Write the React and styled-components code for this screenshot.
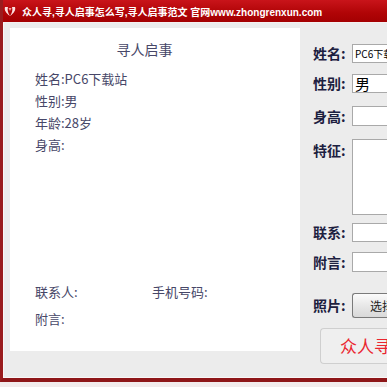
import React from "react";
import styled, { createGlobalStyle } from "styled-components";

const Global = createGlobalStyle`
  html, body { margin: 0; padding: 0; background: #f2ecec; }
  body { font-family: "Noto Sans CJK SC", "DejaVu Sans", sans-serif; }
`;

const Window = styled.div`
  width: 387px;
  height: 382px;
  overflow: hidden;
  display: flex;
  flex-direction: column;
  background: #ececec;
  border-left: 3px solid #9a1c1e;
  border-bottom: 4px solid #8e1618;
  box-sizing: border-box;
`;

const TitleBar = styled.div`
  height: 22px;
  flex: none;
  display: flex;
  align-items: center;
  gap: 6px;
  padding-left: 4px;
  margin-left: -3px;
  background: linear-gradient(#c9141a, #b00406 60%, #a40002);
  color: #fff;
  font-family: "Liberation Sans", "Noto Sans CJK SC", sans-serif;
  font-weight: bold;
  font-size: 10px;
  white-space: nowrap;
  border-bottom: 1px solid #f4f0f0;
`;

const Body = styled.div`
  flex: 1;
  display: flex;
  border-left: 1px solid #faf6f6;
  border-bottom: 1px solid #faf6f6;
  padding: 5px 0 0 6px;
  min-height: 0;
`;

const Sheet = styled.div`
  width: 290px;
  height: 323px;
  flex: none;
  background: #fff;
  box-sizing: border-box;
  padding: 11px 0 0 25px;
  color: #474768;
  font-size: 13px;
  display: flex;
  flex-direction: column;
`;

const SheetTitle = styled.div`
  font-size: 14px;
  text-align: center;
  padding-right: 46px;
  margin-bottom: 9px;
`;

const Line = styled.div`
  line-height: 22px;
  height: 22px;
  display: flex;
  margin-top: ${(p) => p.$mt || 0}px;
  margin-bottom: ${(p) => p.$mb || 0}px;
`;

const Spacer = styled.div`
  flex: 1;
`;

const Cell = styled.span`
  width: ${(p) => p.$w || "auto"};
`;

const Form = styled.div`
  flex: 1;
  display: flex;
  flex-direction: column;
  padding-left: 13px;
  padding-top: 16px;
`;

const Row = styled.div`
  display: flex;
  align-items: ${(p) => (p.$top ? "flex-start" : "center")};
  margin-top: ${(p) => p.$mt || 0}px;
`;

const Label = styled.span`
  width: 39px;
  flex: none;
  font-weight: bold;
  font-size: 14px;
  color: #1c2040;
  line-height: 19px;
  margin-top: ${(p) => (p.$top ? "2px" : 0)};
`;

const Field = styled.div`
  width: 60px;
  height: ${(p) => p.$h || 19}px;
  flex: none;
  box-sizing: border-box;
  background: #fff;
  border: 1px solid #a9a9a9;
  border-right: none;
  font-size: ${(p) => p.$fs || 15}px;
  line-height: ${(p) => (p.$h || 19) - 2}px;
  padding-left: 2px;
  white-space: nowrap;
  overflow: hidden;
  color: #000;
`;

const PickButton = styled.div`
  width: 60px;
  height: 25px;
  box-sizing: border-box;
  border: 1px solid #7a7a7a;
  border-right: none;
  border-radius: 3px 0 0 3px;
  background: linear-gradient(#fbfbfb, #e6e6e6 55%, #d9d9d9);
  font-size: 12px;
  color: #222;
  line-height: 23px;
  padding-left: 17px;
  white-space: nowrap;
  overflow: hidden;
`;

const BigButton = styled.div`
  margin-left: 7px;
  width: 80px;
  height: 36px;
  box-sizing: border-box;
  border: 1px solid #cfcfcf;
  border-right: none;
  border-radius: 4px 0 0 4px;
  background: #efefef;
  color: #ea2630;
  font-size: 17px;
  line-height: 34px;
  padding-left: 19px;
  white-space: nowrap;
  overflow: hidden;
`;

const Logo = () => (
  <svg width="12" height="12" viewBox="0 0 12 12">
    <path d="M1 2 C0 5 2 8 6 11 C4 8 3 5 4 2 Z" fill="#fbe0e0" />
    <path d="M11 2 C12 5 10 8 6 11 C8 8 9 5 8 2 Z" fill="#fbe0e0" />
    <path d="M4.5 3 L6 6 L7.5 3 Z" fill="#ff9090" />
  </svg>
);

export default function App() {
  return (
    <>
      <Global />
      <Window>
        <TitleBar>
          <Logo />
          众人寻,寻人启事怎么写,寻人启事范文 官网www.zhongrenxun.com
        </TitleBar>
        <Body>
          <Sheet>
            <SheetTitle>寻人启事</SheetTitle>
            <Line>姓名:PC6下载站</Line>
            <Line>性别:男</Line>
            <Line>年龄:28岁</Line>
            <Line>身高:</Line>
            <Spacer />
            <Line>
              <Cell $w="117px">联系人:</Cell>
              <Cell>手机号码:</Cell>
            </Line>
            <Line $mt={5} $mb={21}>附言:</Line>
          </Sheet>
          <Form>
            <Row>
              <Label>姓名:</Label>
              <Field $fs={10}>PC6下载站</Field>
            </Row>
            <Row $mt={11}>
              <Label>性别:</Label>
              <Field>男</Field>
            </Row>
            <Row $mt={13}>
              <Label>身高:</Label>
              <Field $h={20} />
            </Row>
            <Row $mt={13} $top>
              <Label $top>特征:</Label>
              <Field $h={76} />
            </Row>
            <Row $mt={8}>
              <Label>联系:</Label>
              <Field />
            </Row>
            <Row $mt={10}>
              <Label>附言:</Label>
              <Field $h={20} />
            </Row>
            <Row $mt={21}>
              <Label>照片:</Label>
              <PickButton>选择...</PickButton>
            </Row>
            <Row $mt={10}>
              <BigButton>众人寻人启事</BigButton>
            </Row>
          </Form>
        </Body>
      </Window>
    </>
  );
}
